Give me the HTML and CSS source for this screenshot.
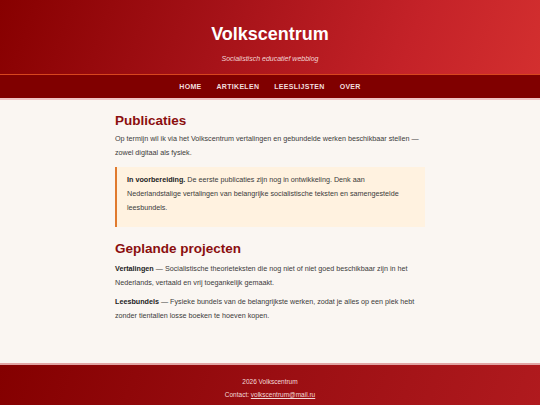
FILE: index.html
```html
<!DOCTYPE html>
<html lang="nl">
<head>
<meta charset="utf-8">
<title>Publicaties - Volkscentrum</title>
<link rel="stylesheet" href="styles.css">
</head>
<body>
<header class="site-header">
  <h1 class="site-title">Volkscentrum</h1>
  <p class="site-tagline">Socialistisch educatief webblog</p>
</header>
<nav class="site-nav">
  <a href="#">Home</a>
  <a href="#">Artikelen</a>
  <a href="#">Leeslijsten</a>
  <a href="#">Over</a>
</nav>
<main class="content">
  <h2 class="section-title">Publicaties</h2>
  <p class="text">Op termijn wil ik via het Volkscentrum vertalingen en gebundelde werken beschikbaar stellen — zowel digitaal als fysiek.</p>
  <div class="notice">
    <p><strong>In voorbereiding.</strong> De eerste publicaties zijn nog in ontwikkeling. Denk aan Nederlandstalige vertalingen van belangrijke socialistische teksten en samengestelde leesbundels.</p>
  </div>
  <h2 class="section-title second">Geplande projecten</h2>
  <p class="text"><strong>Vertalingen</strong> — Socialistische theorieteksten die nog niet of niet goed beschikbaar zijn in het Nederlands, vertaald en vrij toegankelijk gemaakt.</p>
  <p class="text spaced"><strong>Leesbundels</strong> — Fysieke bundels van de belangrijkste werken, zodat je alles op een plek hebt zonder tientallen losse boeken te hoeven kopen.</p>
</main>
<footer class="site-footer">
  <p>2026 Volkscentrum</p>
  <p>Contact: <a href="#">volkscentrum@mail.ru</a></p>
</footer>
</body>
</html>
```
FILE: styles.css
```css
* { box-sizing: border-box; }
html, body { margin: 0; padding: 0; }
body {
  background: #faf6f2;
  font-family: "Liberation Sans", Arial, sans-serif;
  color: #3a3a3a;
}
.site-header {
  background: linear-gradient(110deg, #870000 0%, #a51218 40%, #c42228 75%, #d32f2f 100%);
  text-align: center;
  padding: 22px 0 11px;
  border-bottom: 1px solid #d8461e;
}
.site-title {
  margin: 0;
  font-size: 18px;
  line-height: 24px;
  color: #fff;
  font-weight: bold;
}
.site-tagline {
  margin: 8px 0 0;
  font-size: 7px;
  line-height: 9px;
  font-style: italic;
  color: #f3d6d6;
}
.site-nav {
  background: #800000;
  height: 25px;
  display: flex;
  justify-content: center;
  align-items: center;
  gap: 15px;
  border-bottom: 2px solid #f0c4c4;
}
.site-nav a {
  color: #f1dede;
  text-decoration: none;
  text-transform: uppercase;
  font-weight: bold;
  font-size: 7px;
  letter-spacing: 0.3px;
}
.content {
  max-width: 310px;
  margin: 0 auto;
  padding: 12px 0 40px;
}
.section-title {
  margin: 0 0 2px;
  color: #8b0f0f;
  font-size: 13.5px;
  line-height: 18px;
  font-weight: bold;
}
.section-title.second { margin: 13px 0 4px; }
.text {
  margin: 0;
  font-size: 7.2px;
  line-height: 14px;
}
.text.spaced { margin-top: 5px; }
.text strong { color: #222; }
.notice {
  margin-top: 7px;
  background: #fff2e0;
  border-left: 2px solid #e07a2e;
  padding: 6px 12px 12px 10px;
}
.notice p {
  margin: 0;
  font-size: 7.2px;
  line-height: 14px;
}
.notice strong { color: #222; }
.site-footer {
  background: linear-gradient(110deg, #840000 0%, #9a0e12 50%, #b01a1e 100%);
  border-top: 2px solid #e2a4a4;
  text-align: center;
  padding: 10px 0 6px;
  color: #f3dada;
}
.site-footer p {
  margin: 0;
  font-size: 6.5px;
  line-height: 13px;
}
.site-footer a { color: #f3dada; text-decoration: underline; }
```
